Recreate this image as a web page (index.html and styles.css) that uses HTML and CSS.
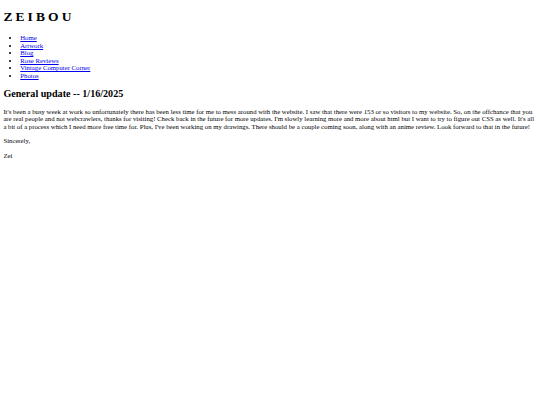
FILE: index.html
```html
<!DOCTYPE html>
<html lang="en">
<head>
<meta charset="utf-8">
<title>Zeibou</title>
<link rel="stylesheet" href="styles.css">
</head>
<body>
<header class="site-header">
  <h1 class="site-title">ZEIBOU</h1>
  <nav class="site-nav">
    <ul class="nav-list">
      <li><a href="#">Home</a></li>
      <li><a href="#">Artwork</a></li>
      <li><a href="#">Blog</a></li>
      <li><a href="#">Rose Reviews</a></li>
      <li><a href="#">Vintage Computer Corner</a></li>
      <li><a href="#">Photos</a></li>
    </ul>
  </nav>
</header>
<main class="post">
  <h2 class="post-title">General update -- 1/16/2025</h2>
  <p class="post-text">It's been a busy week at work so unfortunately there has been less time for me to mess around with the website. I saw that there were 153 or so visitors to my website. So, on the offchance that you are real people and not webcrawlers, thanks for visiting! Check back in the future for more updates. I'm slowly learning more and more about html but I want to try to figure out CSS as well. It's all a bit of a process which I need more free time for. Plus, I've been working on my drawings. There should be a couple coming soon, along with an anime review. Look forward to that in the future!</p>
  <p class="post-text">Sincerely,</p>
  <p class="post-text">Zei</p>
</main>
</body>
</html>
```

FILE: styles.css
```css
html {
  background: #ffffff;
}

body {
  margin: 3.375px;
  font-family: "Liberation Serif", "Times New Roman", serif;
  font-size: 6.75px;
  line-height: 7.6px;
  color: #000000;
}

.site-title {
  font-size: 2em;
  line-height: 15.6px;
  letter-spacing: 3.1px;
  margin: 6px 0 9px;
}

.nav-list {
  margin: 1em 0;
  padding-left: 16.875px;
}

.nav-list a {
  color: #0000ee;
}

.post-title {
  font-size: 1.5em;
  line-height: 11.4px;
  margin: 0.83em 0;
}

.post-text {
  margin: 1em 0;
}
```
